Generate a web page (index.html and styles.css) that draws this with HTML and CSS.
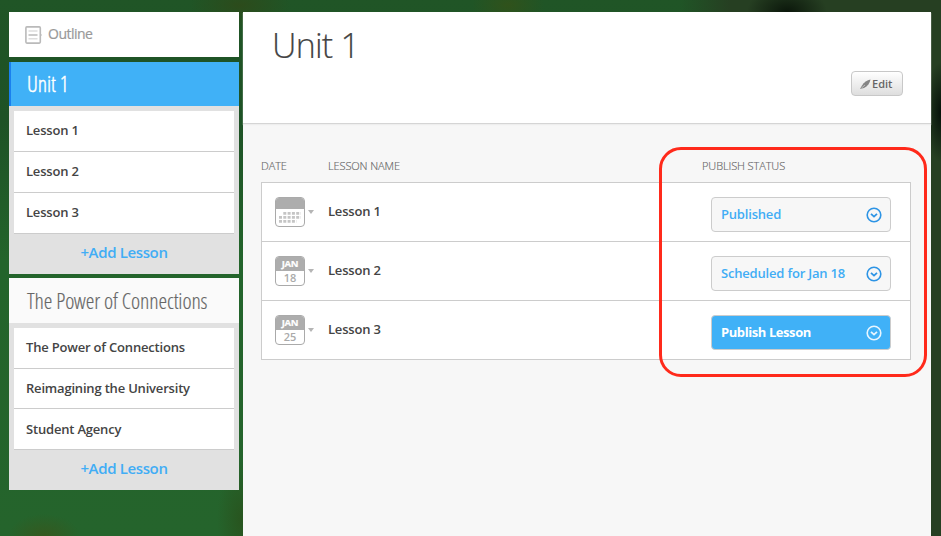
FILE: index.html
```html
<!DOCTYPE html>
<html lang="en">
<head>
<meta charset="utf-8">
<title>Unit 1</title>
<link rel="stylesheet" href="styles.css">
</head>
<body>
<svg width="0" height="0" class="defs" aria-hidden="true">
  <symbol id="chevron" viewBox="0 0 16 16"><circle cx="8" cy="8" r="6.8" fill="none" stroke="currentColor" stroke-width="1.6"/><path d="M5 6.800l3 2.800L11 6.800" fill="none" stroke="currentColor" stroke-width="1.8"/></symbol>
</svg>
<div class="page">
  <aside class="sidebar">
    <div class="outline">
      <svg class="outline-icon" width="18" height="18" viewBox="0 0 18 18"><rect x=".9" y=".9" width="14.4" height="16.2" rx="1" fill="#fff" stroke="#bababa" stroke-width="1.6"/><path d="M3.500 9h9" stroke="#b5b5b5" stroke-width="1.4"/><path d="M3.500 5h9M3.500 12.700h9" stroke="#dedede" stroke-width="1.4"/><path d="M16 8l1 1-1 1" fill="#bbb"/></svg>
      <span>Outline</span>
    </div>
    <section class="unit">
      <h2 class="unit-title active">Unit 1</h2>
      <ul class="lessons"><li>Lesson 1</li><li>Lesson 2</li><li>Lesson 3</li></ul>
      <a class="add">+Add Lesson</a>
    </section>
    <section class="unit">
      <h2 class="unit-title">The Power of Connections</h2>
      <ul class="lessons"><li>The Power of Connections</li><li class="short">Reimagining the University</li><li class="last">Student Agency</li></ul>
      <a class="add">+Add Lesson</a>
    </section>
  </aside>
  <main class="main">
    <header class="head">
      <h1>Unit 1</h1>
      <button class="edit"><svg width="11" height="10" viewBox="0 0 11 10"><path d="M0 10L2 6.500C4 3 7 1 10.500 .5 10 4 7.500 7.500 4 9z" fill="#858585"/><path d="M1.500 9L5 6" stroke="#ccc" stroke-width=".8"/></svg><span>Edit</span></button>
    </header>
    <div class="content">
      <div class="labels"><span>DATE</span><span>LESSON NAME</span><span>PUBLISH STATUS</span></div>
      <div class="table">
        <div class="row">
          <div class="date"><div class="cal"><b></b><svg class="dots" width="27" height="14" viewBox="0 0 27 14"><path d="M7.300 3.300h17.500M3 7.300h21.800M3 11.300h17.500" stroke="#c5c5c5" stroke-width="2.800" stroke-dasharray="3 1.300"/></svg></div><i class="caret"></i></div>
          <div class="name">Lesson 1</div>
          <div class="status"><span>Published</span><svg width="16" height="16"><use href="#chevron"/></svg></div>
        </div>
        <div class="row">
          <div class="date"><div class="cal"><b>JAN</b><em>18</em></div><i class="caret"></i></div>
          <div class="name">Lesson 2</div>
          <div class="status"><span>Scheduled for Jan 18</span><svg width="16" height="16"><use href="#chevron"/></svg></div>
        </div>
        <div class="row">
          <div class="date"><div class="cal"><b>JAN</b><em>25</em></div><i class="caret"></i></div>
          <div class="name">Lesson 3</div>
          <div class="status primary"><span>Publish Lesson</span><svg width="16" height="16"><use href="#chevron"/></svg></div>
        </div>
      </div>
      <div class="highlight"></div>
    </div>
  </main>
</div>
</body>
</html>
```
FILE: styles.css
```css
* { box-sizing: border-box; }
body { margin: 0; height: 536px; overflow: hidden; font: 600 13px/18px "Open Sans", sans-serif; color: #444; letter-spacing: -.19px;
  background:
    radial-gradient(ellipse 40px 26px at 787px 12px, #0b170b 0, rgba(11,23,11,0) 100%),
    radial-gradient(ellipse 16px 50px at 941px 112px, #06110a 0, rgba(6,17,10,0) 100%),
    radial-gradient(ellipse 36px 22px at 44px 536px, #34591f 0, rgba(52,89,31,0) 100%),
    radial-gradient(ellipse 24px 60px at 241px 520px, #28551f 0, rgba(40,85,31,0) 100%),
    radial-gradient(ellipse 36px 24px at 508px 5px, #30521b 0, rgba(48,82,27,0) 100%),
    radial-gradient(ellipse 50px 24px at 240px 5px, #2c4b1b 0, rgba(44,75,27,0) 100%),
    linear-gradient(90deg, rgba(38,60,32,0) 680px, #263f22 730px),
    linear-gradient(#205526 0, #1e5226 120px, #23642b 260px, #25642c 100%); }
h1, h2, ul { margin: 0; padding: 0; font: inherit; list-style: none; }
.defs { display: none; }
.page { display: flex; gap: 4px; padding: 12px 10px 0 9px; height: 536px; align-items: stretch; }
.sidebar { width: 230px; }
.outline { display: flex; align-items: center; gap: 5px; height: 45px; margin-bottom: 5px; padding-left: 16px; background: #fff; color: #999; font-size: 14px; font-weight: 400; }
.outline span { margin-top: -1px; letter-spacing: -.5px; -webkit-text-stroke: .2px; }
.unit { margin-bottom: 4px; background: #e1e1e1; }
.unit-title { height: 45px; padding: 0 18px; background: #fafafa; color: #666; font: 300 22px/45px "Open Sans Condensed Light", "Open Sans", sans-serif; font-stretch: 75%; white-space: nowrap; letter-spacing: -.12px; -webkit-text-stroke: .15px; }
.unit-title.active { height: 44px; padding-left: 16px; border-left: 2px solid #1a80ee; background: #40b1f7; color: #fff; line-height: 43px; -webkit-text-stroke: .4px; }
.lessons { padding: 5px 5px 0; }
.lessons li { height: 41px; padding-left: 12px; border-bottom: 1px solid #ccc; background: #fff; line-height: 39px; }
.lessons .short { height: 40px; }
.lessons .last { line-height: 41px; }
.add { display: block; height: 40px; color: #41adf5; font-size: 15px; line-height: 37px; text-align: center; letter-spacing: -.36px; }
.main { display: flex; flex-direction: column; width: 688px; background: #f7f7f7; }
.head { display: flex; justify-content: space-between; height: 112px; padding: 0 28px 0 29px; border-bottom: 1px solid #d5d5d5; background: #fff; box-shadow: 0 1px 1px #eee; }
h1 { padding-top: 9px; font-size: 34px; font-weight: 300; line-height: 48px; letter-spacing: -.8px; -webkit-text-stroke: .15px; }
.edit { display: flex; align-items: center; gap: 1px; width: 52px; height: 25px; margin-top: 59px; padding: 0 0 0 8px; border: 1px solid #c8c8c8; border-radius: 4px; background: linear-gradient(#fff, #dedede); color: #666; font: 600 11px/18px "Open Sans", sans-serif; }
.content { position: relative; padding: 33px 20px 0 18px; }
.labels, .row { display: grid; grid-template-columns: 67px 374px 1fr; }
.labels { height: 25px; color: #666; font-size: 11px; font-weight: 300; letter-spacing: -.1px; -webkit-text-stroke: .15px; }
.table { border: 1px solid #ccc; background: #fff; }
.row { height: 59px; grid-template-columns: 66px 383px 180px; border-bottom: 1px solid #ccc; }
.row:last-child { height: 58px; border-bottom: 0; }
.date { display: flex; gap: 3px; padding: 14px 0 0 13px; }
.cal { width: 30px; height: 30px; overflow: hidden; border: 1px solid #aaa; border-radius: 4px; background: #fff; text-align: center; }
.cal b { display: block; height: 15px; margin: -1px -1px 0; background: #adadad; color: #fff; font-size: 9.5px; font-weight: 700; line-height: 15px; letter-spacing: -.3px; -webkit-text-stroke: .2px; }
.cal:has(.dots) b { height: 12px; }
.cal em { display: block; color: #aaa; font-size: 11px; font-style: normal; line-height: 13px; letter-spacing: 0; }
.dots { display: block; margin: 1px 0 0; }
.caret { height: 0; margin-top: 13px; border: 3px solid transparent; border-top: 4px solid #b5b5b5; border-bottom: 0; }
.name { padding-top: 19px; }
.status { display: flex; align-items: center; justify-content: space-between; height: 35px; margin-top: 14px; padding: 0 8px 0 9px; border: 1px solid #ccc; border-radius: 4px; background: #f7f7f7; color: #41adf5; }
.status span { margin-top: -2px; }
.status svg { color: #2d94e5; }
.status.primary { background: #40b1f7; color: #fff; font-weight: 700; letter-spacing: -.42px; }
.status.primary svg { color: #e8f6ff; }
.highlight { position: absolute; top: 23px; left: 416px; width: 268px; height: 230px; border: 3px solid #ff2a1b; border-radius: 22px; }
```
